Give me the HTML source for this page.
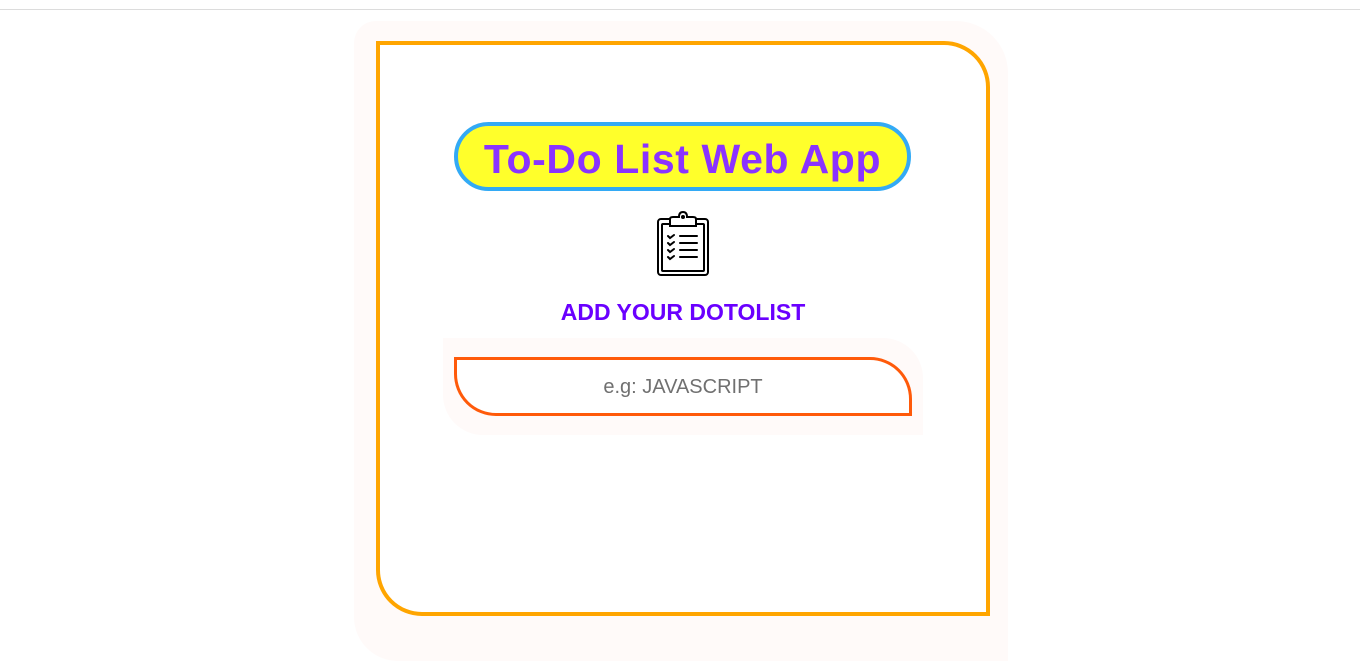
<!DOCTYPE html>
<html><head><style>
body{margin:0;width:1360px;height:626px;background:#fff;overflow:hidden;font-family:"Liberation Sans",sans-serif;position:relative}
.line{position:absolute;left:0;top:9px;width:1360px;height:1px;background:#dcdcdc}
.outer{position:absolute;left:354px;top:21px;width:654px;height:640px;background:#fffaf9;border-radius:22px 52px 0 44px}
.box{position:absolute;left:376px;top:41px;width:606px;height:567px;border:4px solid #ffa500;border-radius:0 46px 0 46px;background:#fff}
.pill{position:absolute;left:454px;top:122px;width:449px;height:61px;border:4px solid #33aaf5;border-radius:36px;background:#ffff2b;color:#8a33ff;font-weight:bold;font-size:41px;text-align:center;line-height:66px;letter-spacing:0.6px}
.h{position:absolute;left:0;width:1366px;top:299px;text-align:center;color:#6a00ff;font-weight:bold;font-size:23px}
.wrap{position:absolute;left:443px;top:338px;width:480px;height:97px;background:#fffaf9;border-radius:0 40px 0 40px}
.inp{position:absolute;left:454px;top:357px;width:452px;height:53px;border:3px solid #ff5a0a;border-radius:0 42px 0 42px;background:#fff;color:#707070;font-size:20px;text-align:center;line-height:54px}
</style></head><body>
<div class="line"></div>
<div class="outer"></div>
<div class="box"></div>
<div class="pill">To-Do List Web App</div>
<svg style="position:absolute;left:655px;top:211px" width="56" height="66" viewBox="0 0 56 66" fill="none" stroke="#000" stroke-width="2" stroke-linecap="round">
<rect x="3" y="8" width="50" height="56" rx="3"/>
<rect x="7" y="13" width="42" height="47" rx="1"/>
<path d="M15 15 V8 Q15 6 18 6 H24 Q24 1 28 1 Q32 1 32 6 H38 Q41 6 41 8 V15 Z" fill="#fff"/>
<circle cx="28" cy="6" r="1" fill="#000"/>
<path d="M13 25 l2 2 l4 -3 M13 32 l2 2 l4 -3 M13 39 l2 2 l4 -3 M13 46 l2 2 l4 -3"/>
<path d="M25 25 H42 M25 32 H42 M25 39 H42 M25 46 H42"/>
</svg>
<div class="h">ADD YOUR DOTOLIST</div>
<div class="wrap"></div>
<div class="inp">e.g: JAVASCRIPT</div>
</body></html>
